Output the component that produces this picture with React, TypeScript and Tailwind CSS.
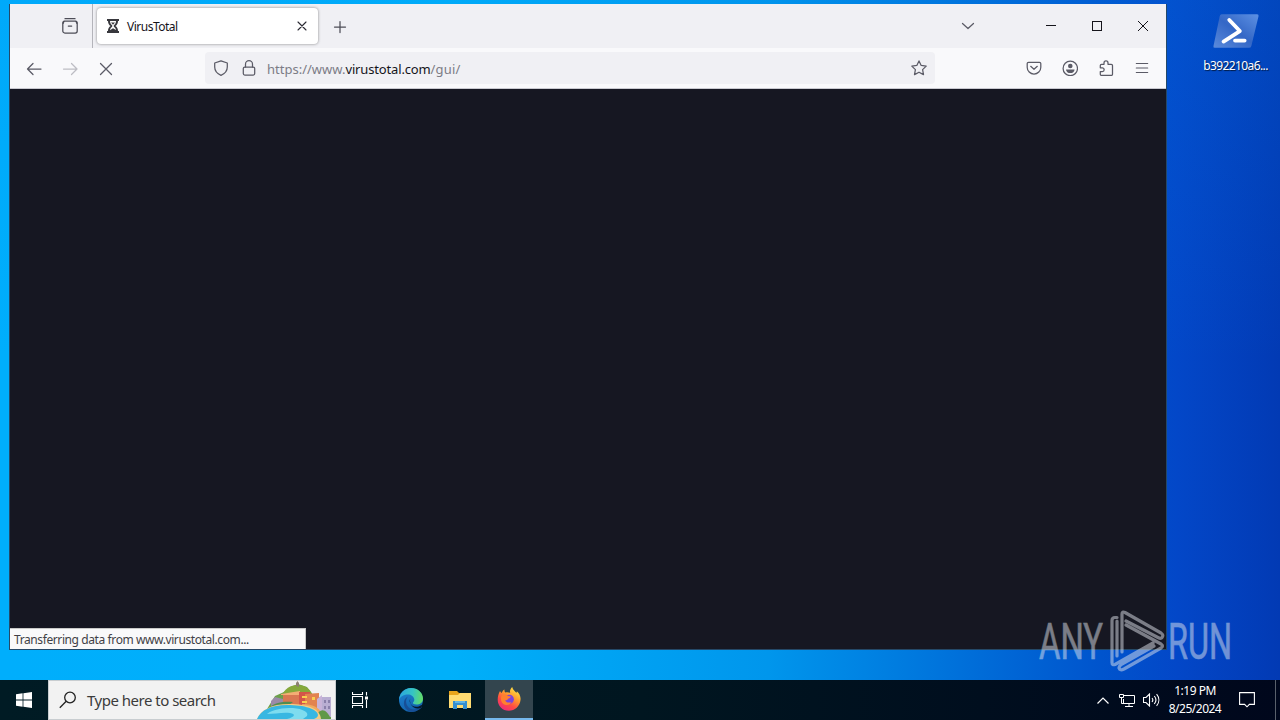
import { FC, ReactNode } from "react";

interface IconProps {
  size?: number
  className?: string
  children: ReactNode
}

// 16px toolbar icon, stroked like the browser's own set
const Icon: FC<IconProps> = ({ size = 16, className = "text-[#5b5b66]", children }) => (
  <svg width={size} height={size} viewBox="0 0 16 16" fill="none" stroke="currentColor" strokeWidth="1.25" strokeLinecap="round" strokeLinejoin="round" className={`shrink-0 ${className}`}>
    {children}
  </svg>
)

const TabBar: FC = () => (
  <div className="flex h-11 bg-[#f0f0f4]">
    <div className="flex w-[83px] items-center justify-end border-r border-[#b4b4ba] pr-3.5">
      <Icon className="text-[#4d4d57]">
        <path d="M3 .7h10" />
        <rect x=".8" y="3" width="14.400" height="12" rx="2" />
        <path d="M1.200 5.300 2 3.300M14.800 5.300 14 3.300M6.300 8h3.400" />
      </Icon>
    </div>
    <div className="ml-1 mt-1 flex h-9 w-[221px] items-center rounded bg-white pl-2.5 pr-2 shadow-[0_0_3px_rgba(0,0,0,0.45)]">
      <svg width="12" height="14" viewBox="0 0 12 14" className="shrink-0">
        <path d="M0 0h12v2h-1c0 2.5-1 4-2.6 5C10 8 11 9.500 11 12h1v2H0v-2h1c0-2.500 1-4 2.600-5C2 6 1 4.500 1 2H0z" fill="#38383d" />
        <path d="M3 2h6c0 2-.8 3.200-2.200 4.300v1.400C8.200 8.500 8.800 9.500 9 11L6 9.300 3 11.300c.2-1.800.8-2.800 2.200-3.600V6.300C3.800 5.200 3 4 3 2z" fill="#fff" />
        <path d="M4 3.600h4L6 5.800z" fill="#38383d" />
      </svg>
      <span className="ml-2 flex-1 pt-0.5 text-[12px] leading-4 tracking-[-0.5px] text-[#15141a]">VirusTotal</span>
      <Icon className="text-[#2b2a33]">
        <path d="m4 4 8 8M12 4l-8 8" strokeWidth="1.100" />
      </Icon>
    </div>
    <div className="flex w-[43px] items-center justify-center pt-px">
      <Icon className="text-[#4d4d57]">
        <path d="M8 2.500v11M2.500 8h11" />
      </Icon>
    </div>
    <div className="ml-auto flex items-center">
      <div className="mr-11 flex w-8 justify-center">
        <Icon><path d="m2.500 5.500 5.500 5 5.500-5" /></Icon>
      </div>
      <svg width="138" height="44" viewBox="0 0 138 44" fill="none" stroke="#15141a" strokeWidth="1">
        <path d="M18 21.500h10" />
        <rect x="64.500" y="17.500" width="9" height="9" />
        <path d="m110 17 10 10M120 17l-10 10" />
      </svg>
    </div>
  </div>
)

const NavBar: FC = () => (
  <div className="flex h-[41px] items-center border-b border-[#c9c9d0] bg-[#f9f9fb]">
    <div className="flex w-[195px] items-center gap-5 pl-4 pt-px">
      <Icon><path d="M15 8H1.500M7 2.500 1.500 8 7 13.500" /></Icon>
      <Icon className="text-[#bdbdc3]"><path d="M1.500 8H15M9.500 2.500 15 8l-5.500 5.500" /></Icon>
      <Icon><path d="m2.500 2.500 11 11M13.500 2.500l-11 11" /></Icon>
    </div>
    <div className="flex h-8 w-[730px] items-center rounded bg-[#f0f0f4] pl-2 pr-2">
      <Icon><path d="M8 .8 14.300 3v4c0 4-2.500 6.700-6.300 8.300C4.200 13.700 1.700 11 1.700 7V3z" /></Icon>
      <Icon className="ml-3 text-[#5b5b66]">
        <rect x="2.300" y="7" width="11.400" height="8" rx="1.500" />
        <path d="M4.500 7V4.200a3.500 3.500 0 0 1 7 0V7" />
      </Icon>
      <span className="ml-2.5 flex-1 whitespace-nowrap pt-[3px] text-[13px] text-[#7c7c86]">
        <span>https://www.</span>
        <span className="text-[#15141a] tracking-[-0.15px]">virustotal.com</span>
        <span className="tracking-[0.2px]">/gui/</span>
      </span>
      <Icon><path d="m8 .9 2.200 4.500 5 .7-3.600 3.500.9 5L8 12.200l-4.500 2.400.9-5L.8 6.100l5-.7z" /></Icon>
    </div>
    <div className="ml-auto flex items-center gap-5 pr-4">
      <Icon>
        <path d="M2.500 2.300h11c.8 0 1.300.5 1.300 1.300v3.600a6.800 6.800 0 0 1-13.600 0V3.600c0-.8.5-1.300 1.300-1.300z" />
        <path d="M4.700 6.300 8 9.300l3.300-3" />
      </Icon>
      <Icon>
        <circle cx="8.300" cy="8.400" r="7.200" />
        <circle cx="8.300" cy="6" r="2.300" fill="currentColor" stroke="none" />
        <path d="M4 9.400h8.600c-.2 2.200-1.900 3.700-4.300 3.700S4.200 11.600 4 9.400z" fill="currentColor" stroke="none" />
      </Icon>
      <Icon>
        <path d="M6 4.300V2.900a2 2 0 0 1 4 0v1.400h3.300c.7 0 1.200.5 1.200 1.200v8.700c0 .7-.5 1.200-1.200 1.200H3.500c-.7 0-1.200-.5-1.200-1.200v-2.700h2a1.700 1.700 0 0 0 0-3.700h-2V5.500c0-.7.5-1.200 1.200-1.200z" />
      </Icon>
      <Icon><path d="M2.300 3.500h11.400M2.300 8h11.400M2.300 12.500h11.400" strokeWidth="1.100" /></Icon>
    </div>
  </div>
)

const Island: FC = () => (
  <svg width="78" height="38" viewBox="0 0 78 38" className="shrink-0">
    <path d="m10 28 8-13 9-4 6-5 8-3 9 3 6 8 12 4 6 8v12H10z" fill="#6ba04a" />
    <path d="M26 12c4-6 9-8 15-8 7 0 12 4 14 9z" fill="#86a83b" />
    <path d="M39 5V2l1.500-2L42 2v4z" fill="#8d8070" />
    <path d="m14 20 4-4 8 2v8H14z" fill="#9a8aa8" />
    <path d="M26 13h18v13H26z" fill="#d97852" />
    <path d="m24 13 19-3v4H24z" fill="#f3ad74" />
    <path d="M42 11h11v17H42z" fill="#d45549" />
    <path d="m48 13 14-1v16H48z" fill="#e2834f" />
    <path d="M45 15h5v2h-5zM45 20h5v2h-5zM55 16h3v3h-3z" fill="#f9cf4f" />
    <path d="m60 18 5-4v18h-5z" fill="#c8b3d8" />
    <path d="M65 16h9v20h-9z" fill="#b9aed2" />
    <path d="M67 19h2v3h-2zM71 19h2v3h-2zM67 25h2v3h-2zM71 25h2v3h-2z" fill="#8a80aa" />
    <path d="M11 28c5-6 14-8 25-7l-8 6z" fill="#518c50" />
    <path d="M45 23c11 0 17 4 19 8l4 7H48z" fill="#f0a95f" />
    <path d="M61 32c4-5 9-3 13 6H63z" fill="#609847" />
    <path d="M0 38C4 29 14 23 32 23c20 0 31 5 32 15z" fill="#f6cb82" />
    <path d="M0 38C4 29 14 24 30 24c18 0 30 4 31 10 0 2-2 3-4 4z" fill="#38b7e2" />
    <path d="M10 33c6-5 16-6 26-6 10 1 16 4 14 8l-4 3H30c8-2 9-5 3-6-7-1-16 1-23 1z" fill="#7edcef" />
  </svg>
)

const EdgeIcon: FC = () => (
  <svg width="24" height="24" viewBox="0 0 24 24">
    <defs>
      <linearGradient id="edgeTop" x1="0" y1=".4" x2="1" y2=".5">
        <stop offset="0" stopColor="#2ba6df" />
        <stop offset=".55" stopColor="#35c4c4" />
        <stop offset="1" stopColor="#63dc67" />
      </linearGradient>
      <linearGradient id="edgeLow" x1="0" y1="0" x2=".4" y2="1">
        <stop offset="0" stopColor="#2086d6" />
        <stop offset="1" stopColor="#1263ad" />
      </linearGradient>
    </defs>
    <circle cx="12" cy="12" r="12" fill="url(#edgeLow)" />
    <path d="M0 12C.5 5 5.500 0 12 0c7 0 12 5 12 10.500 0 4-3 6-6.500 6-2.500 0-4-1-3.500-2 1-1.200 1.300-2 1.300-3C15 8.500 12 6.500 9 6.500 4 6.500.8 9 0 12z" fill="url(#edgeTop)" />
    <path d="M9 8.500c-3 3-2.500 9 2 12 3.500 2.200 8 1 11-2.200l1 .5C21 22 16.500 24 12 24 7 22.500 4.500 18.500 5 14c.3-2.500 1.800-4.500 4-5.500z" fill="#174f96" />
    <path d="M11.500 10.500c-1.500 1.500-1 5 1.500 7 3 2 6.500 1.500 9.500-.6l.7.7-1 2.200c-4 1.500-8 .5-10.200-3-1-2.200-1.500-5-.5-6.300z" fill="#06182b" />
  </svg>
)

const FolderIcon: FC = () => (
  <svg width="22" height="18" viewBox="0 0 22 18">
    <path d="M0 0h8l2 2h11v5H0z" fill="#e8a51c" />
    <path d="M0 4h9l2-2h11v15H0z" fill="#ffdc72" />
    <path d="M4 10h14v8h-4v-4H8v4H4z" fill="#358fcf" />
    <path d="M6 10h10v2H6z" fill="#61b5e5" />
  </svg>
)

const FirefoxIcon: FC = () => (
  <svg width="24" height="24" viewBox="0 0 24 24">
    <defs>
      <linearGradient id="foxBody" x1=".85" y1="0" x2=".25" y2="1">
        <stop offset="0" stopColor="#fff04b" />
        <stop offset=".4" stopColor="#ff9b2d" />
        <stop offset=".7" stopColor="#ff4a45" />
        <stop offset="1" stopColor="#ed2a7c" />
      </linearGradient>
    </defs>
    <path d="M3 4c.5 1 1 1.600 1.700 2 .5-1.700 1.500-2.900 2.800-3.600-.2 1.200 0 2.200.7 3.200 2-.5 3.500-.3 5 .3-.7-2 .3-4.300 2-5.900.5 2.300 1.800 3.500 3.300 4.900l1 .9c.4-.4.4-1 .3-1.600C22.300 6.300 24 9.500 23.500 13c-.6 6.200-5.600 10.700-11.700 10.700C5.500 23.700.7 18.800.7 12.700.7 9.600 1.500 6.700 3 4z" fill="url(#foxBody)" />
    <circle cx="12.300" cy="12.300" r="4.600" fill="#7c45dc" />
    <path d="M4.700 8.500c2-1.500 4.500-1 6.300.4 1 .2 2.200.2 2.800.6-.2 1.200-1.600 1.900-2.700 2.200-.5 1.200-1.800 1.600-3 1.500 1 2.400 3.600 2.800 6.300 1.700-1.300 2.700-4 3.700-6.500 2.900-3.400-1-5.100-5.800-3.200-9.300z" fill="#ff802f" />
  </svg>
)

const Taskbar: FC = () => (
  <div className="flex h-10 items-stretch bg-linear-to-r from-[#001b24] via-[#001620] to-[#00071c] text-white">
    <div className="flex w-12 items-center justify-center">
      <svg width="16" height="16" viewBox="0 0 16 16" fill="#fff">
        <path d="M0 2.200 6.600 1.300v6.300H0zM7.400 1.200 16 0v7.600H7.400zM0 8.400h6.600v6.300L0 13.800zM7.400 8.400H16V16l-8.600-1.200z" />
      </svg>
    </div>
    <div className="flex w-72 items-center border border-[#c8cdd0] bg-[#f2f2f2] pl-2.5">
      <svg width="18" height="18" viewBox="0 0 18 18" fill="none" stroke="#222" strokeWidth="1.300">
        <circle cx="11" cy="6.500" r="5.300" />
        <path d="M7.200 10.300.8 16.800" />
      </svg>
      <span className="ml-2.5 flex-1 whitespace-nowrap text-[15px] tracking-[-0.5px] text-[#3b3b3b]">Type here to search</span>
      <Island />
    </div>
    <div className="flex w-[49px] items-center justify-center">
      <svg width="17" height="16" viewBox="0 0 17 16" fill="none" stroke="#fff" strokeWidth="1.100">
        <path d="M.5 0v2.500h10V0M.5 16v-2.500h10V16M.5 4.500h10v7H.5zM14.500 0v3.500M14.500 8v8" />
        <path d="M13 4.500h3v3h-3z" fill="#fff" stroke="none" />
      </svg>
    </div>
    <div className="flex w-[51px] items-center justify-center"><EdgeIcon /></div>
    <div className="flex w-[49px] items-center justify-center pr-0.5"><FolderIcon /></div>
    <div className="flex w-12 items-center justify-center border-b-2 border-[#76b9ed] bg-[#33454e]"><FirefoxIcon /></div>
    <div className="ml-auto flex items-center">
      <svg width="12" height="7" viewBox="0 0 12 7" fill="none" stroke="#fff" strokeWidth="1.200"><path d="m.5 6.500 5.500-5.500 5.500 5.500" /></svg>
      <svg width="17" height="15" viewBox="0 0 17 15" fill="none" stroke="#fff" className="ml-2.5">
        <path d="M5 2.500h10.500v8H4.500V6M10 10.500v3M6 13.500h8M.5 1.500h4v3h-4zM2.500 4.500v6h3" />
      </svg>
      <svg width="17" height="14" viewBox="0 0 17 14" fill="none" stroke="#fff" strokeWidth="1.100" className="ml-[7px]">
        <path d="M.5 4.500H3L6.500 1v12L3 9.500H.5zM9 5c1 1.200 1 2.800 0 4M11.300 3c2 2.400 2 5.600 0 8M13.600 1.200c3 3.500 3 8.100 0 11.600" />
      </svg>
      <div className="flex w-[72px] flex-col items-center pr-0.5 text-[12px] leading-[18px]">
        <span className="tracking-[-0.5px]">1:19 PM</span>
        <span className="tracking-[-0.5px]">8/25/2024</span>
      </div>
      <svg width="16" height="16" viewBox="0 0 16 16" fill="none" stroke="#fff" strokeWidth="1.100" className="ml-[7px]">
        <path d="M.6.6h14.800v11.800h-5L8 14.800l-2.400-2.400h-5z" />
      </svg>
      <div className="ml-5 h-10 w-[5px] border-l border-[#59606b]" />
    </div>
  </div>
)

const Watermark: FC = () => (
  <svg width="216" height="74" viewBox="0 0 216 74" className="absolute left-[1036px] top-[606px] opacity-50">
    <g fill="#dfe3ec" stroke="#dfe3ec" strokeWidth=".6" fontFamily="Roboto" fontSize="50" fontWeight="400">
      <text x="3" y="53" textLength="64" lengthAdjust="spacingAndGlyphs">ANY</text>
      <text x="132" y="53" textLength="64" lengthAdjust="spacingAndGlyphs">RUN</text>
    </g>
    <path
      d="M81 11.500h-2q-3 0-3 3v42q0 3 3 2l38-21.500M86 46V8q0-3 3-1.500L125 27q3 2 1 4.500-1 1.500-4 0L90 15M81 50V15M90 19l35 19q3 2 0 4L88 63q-4 2-5-1 0-2 3-4l32-18"
      fill="none" stroke="#dfe3ec" strokeWidth="3.200" strokeLinecap="round" strokeLinejoin="round"
    />
  </svg>
)

export default function App() {
  return (
    <div className="relative flex h-[720px] w-[1280px] flex-col overflow-hidden bg-[linear-gradient(180deg,rgba(0,140,240,0.15)_0%,rgba(0,140,240,0)_50%),linear-gradient(90deg,#00aefc_0%,#00b0fa_35%,#0096ec_60%,#0070da_75%,#0054cd_86%,#0347c8_92%,#023ab4_100%)] font-['Noto_Sans',sans-serif]">
      <div className="flex h-[680px] pl-[9px] pt-1">
        <div className="flex h-[646px] w-[1158px] flex-col border border-t-0 border-[#244969] bg-[#161722]">
          <TabBar />
          <NavBar />
          <div className="flex flex-1 items-end">
            <div className="flex h-[21px] w-[296px] items-center whitespace-nowrap border-r border-t border-[#c9c9c9] bg-[#f9f9fa] pl-1 pt-0.5 text-[12px] tracking-[-0.4px] text-[#3f3f46]">
              Transferring data from www.virustotal.com...
            </div>
          </div>
        </div>
        <div className="flex flex-1 flex-col items-center pl-6 pt-2.5">
          <svg width="46" height="35" viewBox="0 0 48 36">
            <defs>
              <linearGradient id="psTile" x1="0" y1="1" x2="1" y2="0">
                <stop offset="0" stopColor="#5b8bdc" />
                <stop offset=".5" stopColor="#3467c6" />
                <stop offset="1" stopColor="#5d91e4" />
              </linearGradient>
            </defs>
            <path d="M9 0h37q2 0 1.500 2L40 33q-.5 2-2.500 2H2q-2 0-1.500-2L7 2q.5-2 2-2z" fill="url(#psTile)" />
            <path d="m17 6 11 11.500L11 28.500M23 27.500h10" fill="none" stroke="#fff" strokeWidth="4" strokeLinecap="round" strokeLinejoin="round" />
          </svg>
          <span className="mt-[9px] text-[12px] leading-4 tracking-[-0.6px] text-white [text-shadow:1px_1px_1px_#000a]">b392210a6...</span>
        </div>
      </div>
      <Taskbar />
      <Watermark />
    </div>
  )
}
